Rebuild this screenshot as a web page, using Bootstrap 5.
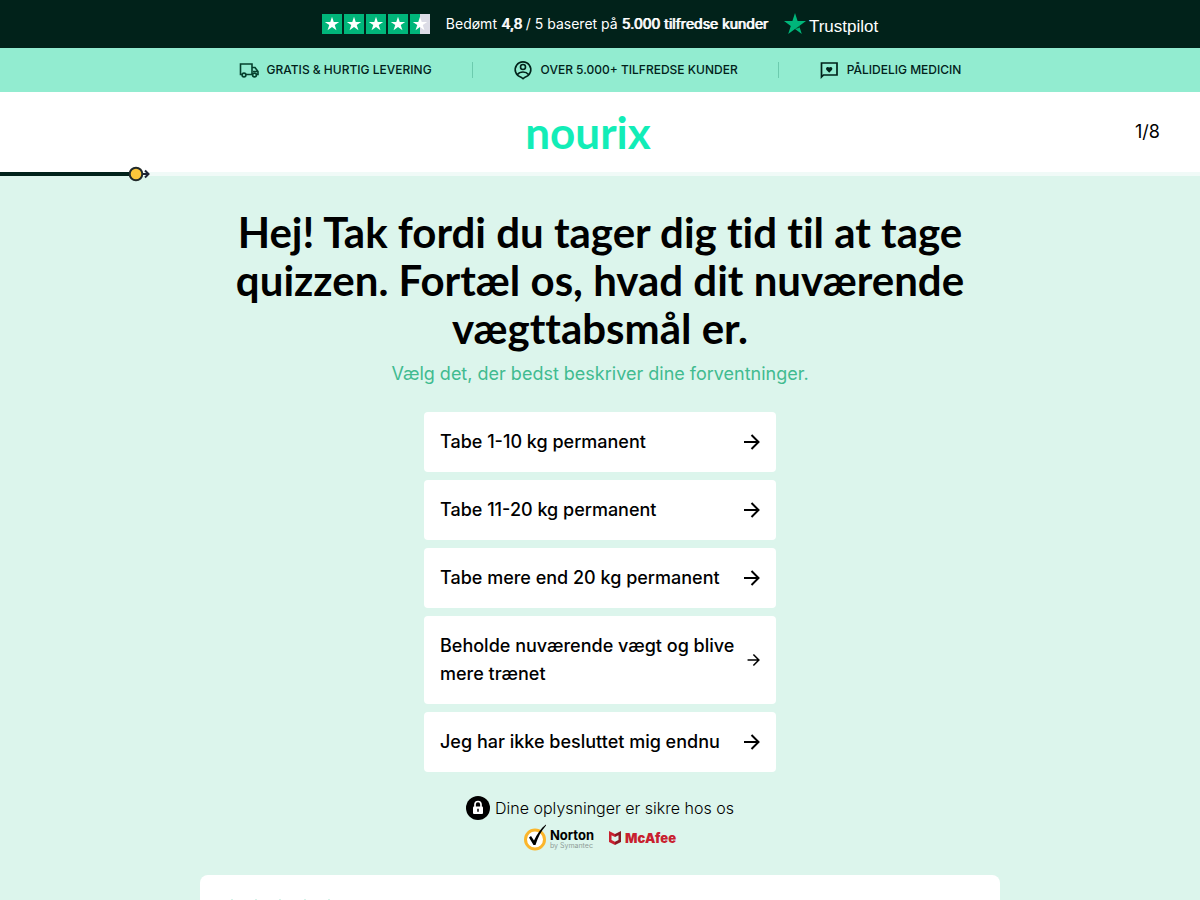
<!DOCTYPE html>
<html lang="da">
<head>
<meta charset="utf-8">
<meta name="viewport" content="width=device-width, initial-scale=1">
<title>Nourix quiz</title>
<link href="https://cdn.jsdelivr.net/npm/bootstrap@5.3.0/dist/css/bootstrap.min.css" rel="stylesheet">
<style>
  body { font-family: Inter, "Liberation Sans", sans-serif; color: #000; background: #dcf5ec; }
  .rating-bar { background: #01221a; min-height: 48px; font-size: 14px; line-height: 20px; }
  .rating-bar b { font-weight: 400; text-shadow: 1px 0 currentColor; }
  .trust-name { font-family: "Liberation Sans", sans-serif; font-size: 17px; line-height: 16px; }
  .trust-logo { gap: 3px; }
  .usp-bar { background: #92ecd0; min-height: 44px; font-size: 12px; font-weight: 500; color: #01221a; line-height: 20px; gap: 40px; }
  .usp-bar .vr { background: #6ccbae; height: 16px; min-height: 0; opacity: 1; }
  .quiz-head { min-height: 80px; display: grid; grid-template-columns: 1fr auto 1fr; padding: 0 40px; }
  .brand { font-family: Lato, sans-serif; font-weight: 700; font-size: 44px; line-height: 80px; color: #12edb7; padding-right: 24px; }
  .step { font-size: 18px; line-height: 28px; }
  .track { height: 4px; background: #f0faf7; }
  .track-fill { height: 4px; background: #01221a; }
  .track-dot { right: -20px; top: -6px; }
  .quiz-body { padding-top: 32px; }
  .quiz-inner { max-width: 800px; }
  h1 { font-family: Lato, sans-serif; font-weight: 700; font-size: 42px; line-height: 48px; font-variant-ligatures: none; }
  .lead-line { font-size: 18px; line-height: 28px; color: #41bb90; padding-top: 8px; }
  .options { max-width: 352px; }
  .option { background: #fff; border: 0; border-radius: 4px; padding: 16px; font-size: 18px; line-height: 28px; font-weight: 500; min-height: 60px; color: #000; }
  .option:hover { background: #f4fffb; }
  .safe { font-size: 16px; line-height: 24px; gap: 5px; }
  .seals { gap: 14px; }
  .norton b { font-size: 13px; font-weight: 700; line-height: 14px; }
  .norton small { font-size: 7px; color: #8f9d98; line-height: 8px; }
  .norton-name { padding-top: 3px; }
  .mcafee { color: #c8202f; font-size: 13px; font-weight: 900; line-height: 16px; gap: 3px; }
  .review { background: #fff; border-radius: 8px; padding: 24px 21px; min-height: 200px; }
</style>
</head>
<body>
<svg class="d-none">
  <symbol id="star" viewBox="0 0 22 22"><path d="M11 3l1.900 5.700h6l-4.900 3.500 1.900 5.800-4.900-3.600-4.900 3.600 1.900-5.800-4.900-3.500h6z"/></symbol>
  <symbol id="arrow" viewBox="0 0 18 18"><path d="M2 9h14.500M9.500 2l7 7-7 7" fill="none" stroke="#000" stroke-width="2"/></symbol>
</svg>

<div class="rating-bar d-flex flex-wrap align-items-center justify-content-center gap-3 text-white">
  <svg width="108" height="20" viewBox="0 0 108 20" role="img" aria-label="4,8 af 5 stjerner">
    <path fill="#00b67a" d="M0 0h20v20H0zM22 0h20v20H22zM44 0h20v20H44zM66 0h20v20H66zM88 0h10v20H88z"/>
    <path fill="#dcdce6" d="M98 0h10v20H98z"/>
    <g fill="#fff"><use href="#star" width="20" height="20"/><use href="#star" x="22" width="20" height="20"/><use href="#star" x="44" width="20" height="20"/><use href="#star" x="66" width="20" height="20"/><use href="#star" x="88" width="20" height="20"/></g>
  </svg>
  <span>Bedømt <b>4,8</b> / 5 baseret på <b>5.000 tilfredse kunder</b></span>
  <span class="trust-logo d-flex align-items-end">
    <svg width="22" height="22" viewBox="0 0 22 22"><path fill="#00b67a" d="M11 0l2.600 8H22l-6.800 5 2.600 8L11 16.100 4.200 21l2.600-8L0 8h8.400z"/><path fill="#005128" d="M15.800 14.800l-.6-1.800L11 16.100z"/></svg>
    <span class="trust-name">Trustpilot</span>
  </span>
</div>

<div class="usp-bar d-flex flex-wrap align-items-center justify-content-center">
  <span class="d-flex align-items-center gap-2">
    <svg width="20" height="20" viewBox="0 0 20 20" fill="none" stroke="#06402d" stroke-width="1.600"><path d="M3 14.500H1.500V4H13v10.500H7M13 7.500h3l3 4v3h-1.500M13 14.500h.5M14 11.500h5"/><circle cx="5" cy="15" r="1.900"/><circle cx="15.500" cy="15" r="1.900"/></svg>
    GRATIS &amp; HURTIG LEVERING</span>
  <span class="vr align-self-center"></span>
  <span class="d-flex align-items-center gap-2">
    <svg width="20" height="20" viewBox="0 0 20 20" fill="none" stroke="#01221a" stroke-width="1.600"><path d="M10 18.700l-2-1.500a7.800 7.800 0 1 1 4 0z"/><circle cx="10" cy="7" r="2.500"/><path d="M4.500 14.500c2.500-3.300 8.500-3.300 11 0"/></svg>
    OVER 5.000+ TILFREDSE KUNDER</span>
  <span class="vr align-self-center"></span>
  <span class="d-flex align-items-center gap-2">
    <svg width="20" height="20" viewBox="0 0 20 20" fill="none" stroke="#01221a" stroke-width="1.700"><path d="M2.500 17V3H18v12H4.500z"/><path fill="#01221a" stroke="none" d="M10.200 12.800L7.500 10C6 8.400 8.300 5.700 10.200 7.600c1.900-1.900 4.200.8 2.700 2.400z"/></svg>
    PÅLIDELIG MEDICIN</span>
</div>

<header class="quiz-head bg-white align-items-center">
  <span></span>
  <a class="brand text-decoration-none" href="#">nourix</a>
  <span class="step text-end">1/8</span>
</header>
<div class="track">
  <div class="track-fill position-relative" style="width:10.900%">
    <svg class="track-dot position-absolute" width="22" height="16" viewBox="0 0 22 16"><path d="M14 8h6M16 4.500L19.500 8 16 11.500" fill="none" stroke="#1c2233" stroke-width="2"/><circle cx="7" cy="8" r="6.300" fill="#fdc73b" stroke="#222a2a" stroke-width="2"/></svg>
  </div>
</div>

<main class="quiz-body">
  <div class="quiz-inner mx-auto">
    <h1 class="text-center mb-0">Hej! Tak fordi du tager dig tid til at tage quizzen. Fortæl os, hvad dit nuværende vægttabsmål er.</h1>
    <p class="lead-line text-center mb-4">Vælg det, der bedst beskriver dine forventninger.</p>
    <div class="options mx-auto d-grid gap-2">
      <button type="button" class="option d-flex align-items-center justify-content-between text-start">Tabe 1-10 kg permanent<svg class="flex-shrink-0" width="18" height="18"><use href="#arrow"/></svg></button>
      <button type="button" class="option d-flex align-items-center justify-content-between text-start">Tabe 11-20 kg permanent<svg class="flex-shrink-0" width="18" height="18"><use href="#arrow"/></svg></button>
      <button type="button" class="option d-flex align-items-center justify-content-between text-start">Tabe mere end 20 kg permanent<svg class="flex-shrink-0" width="18" height="18"><use href="#arrow"/></svg></button>
      <button type="button" class="option d-flex align-items-center justify-content-between text-start">Beholde nuværende vægt og blive mere trænet<svg class="flex-shrink-0" width="14" height="14"><use href="#arrow"/></svg></button>
      <button type="button" class="option d-flex align-items-center justify-content-between text-start">Jeg har ikke besluttet mig endnu<svg class="flex-shrink-0" width="18" height="18"><use href="#arrow"/></svg></button>
    </div>
    <div class="safe d-flex align-items-center justify-content-center mt-4">
      <svg width="24" height="24" viewBox="0 0 24 24"><circle cx="12" cy="12" r="12"/><rect x="7" y="10.500" width="10" height="7.500" rx="1" fill="#fff"/><path d="M9 11V8.500a3 3 0 0 1 6 0V11" fill="none" stroke="#fff" stroke-width="1.700"/><path d="M12 12.800v3" stroke="#000" stroke-width="1.500"/></svg>
      <span class="fw-light">Dine oplysninger er sikre hos os</span>
    </div>
    <div class="seals d-flex align-items-center justify-content-center mt-1 mb-4">
      <span class="norton d-flex align-items-center gap-1">
        <svg width="22" height="27" viewBox="0 0 22 27"><circle cx="11" cy="15.500" r="9.500" fill="#fff" stroke="#fbb62c" stroke-width="3"/><path d="M5 13.500l2-1.500 3 4.500C13 10 17 4 22 .5l.5.500C17.500 6.500 14 13 11.500 21H9.500z"/></svg>
        <span class="norton-name d-flex flex-column"><b>Norton</b><small>by Symantec</small></span>
      </span>
      <span class="mcafee d-flex align-items-center">
        <svg width="14" height="15" viewBox="0 0 14 15"><path fill="#c8202f" d="M1 1l6 3v3L3.500 5.300V10L7 11.800V15l-6-3z"/><path fill="#8c1823" d="M13 1L7 4v3l3.500-1.700V10L7 11.800V15l6-3z"/></svg>
        McAfee</span>
    </div>
    <section class="review d-flex align-items-start">
      <svg width="120" height="22" viewBox="0 0 120 22" fill="#00b67a"><use href="#star" width="22" height="22" y="-3"/><use href="#star" x="24" width="22" height="22" y="-3"/><use href="#star" x="48" width="22" height="22" y="-3"/><use href="#star" x="73" width="22" height="22" y="-3"/><use href="#star" x="97" width="22" height="22" y="-3"/></svg>
    </section>
  </div>
</main>
<script src="https://cdn.jsdelivr.net/npm/bootstrap@5.3.0/dist/js/bootstrap.bundle.min.js"></script>
</body>
</html>
